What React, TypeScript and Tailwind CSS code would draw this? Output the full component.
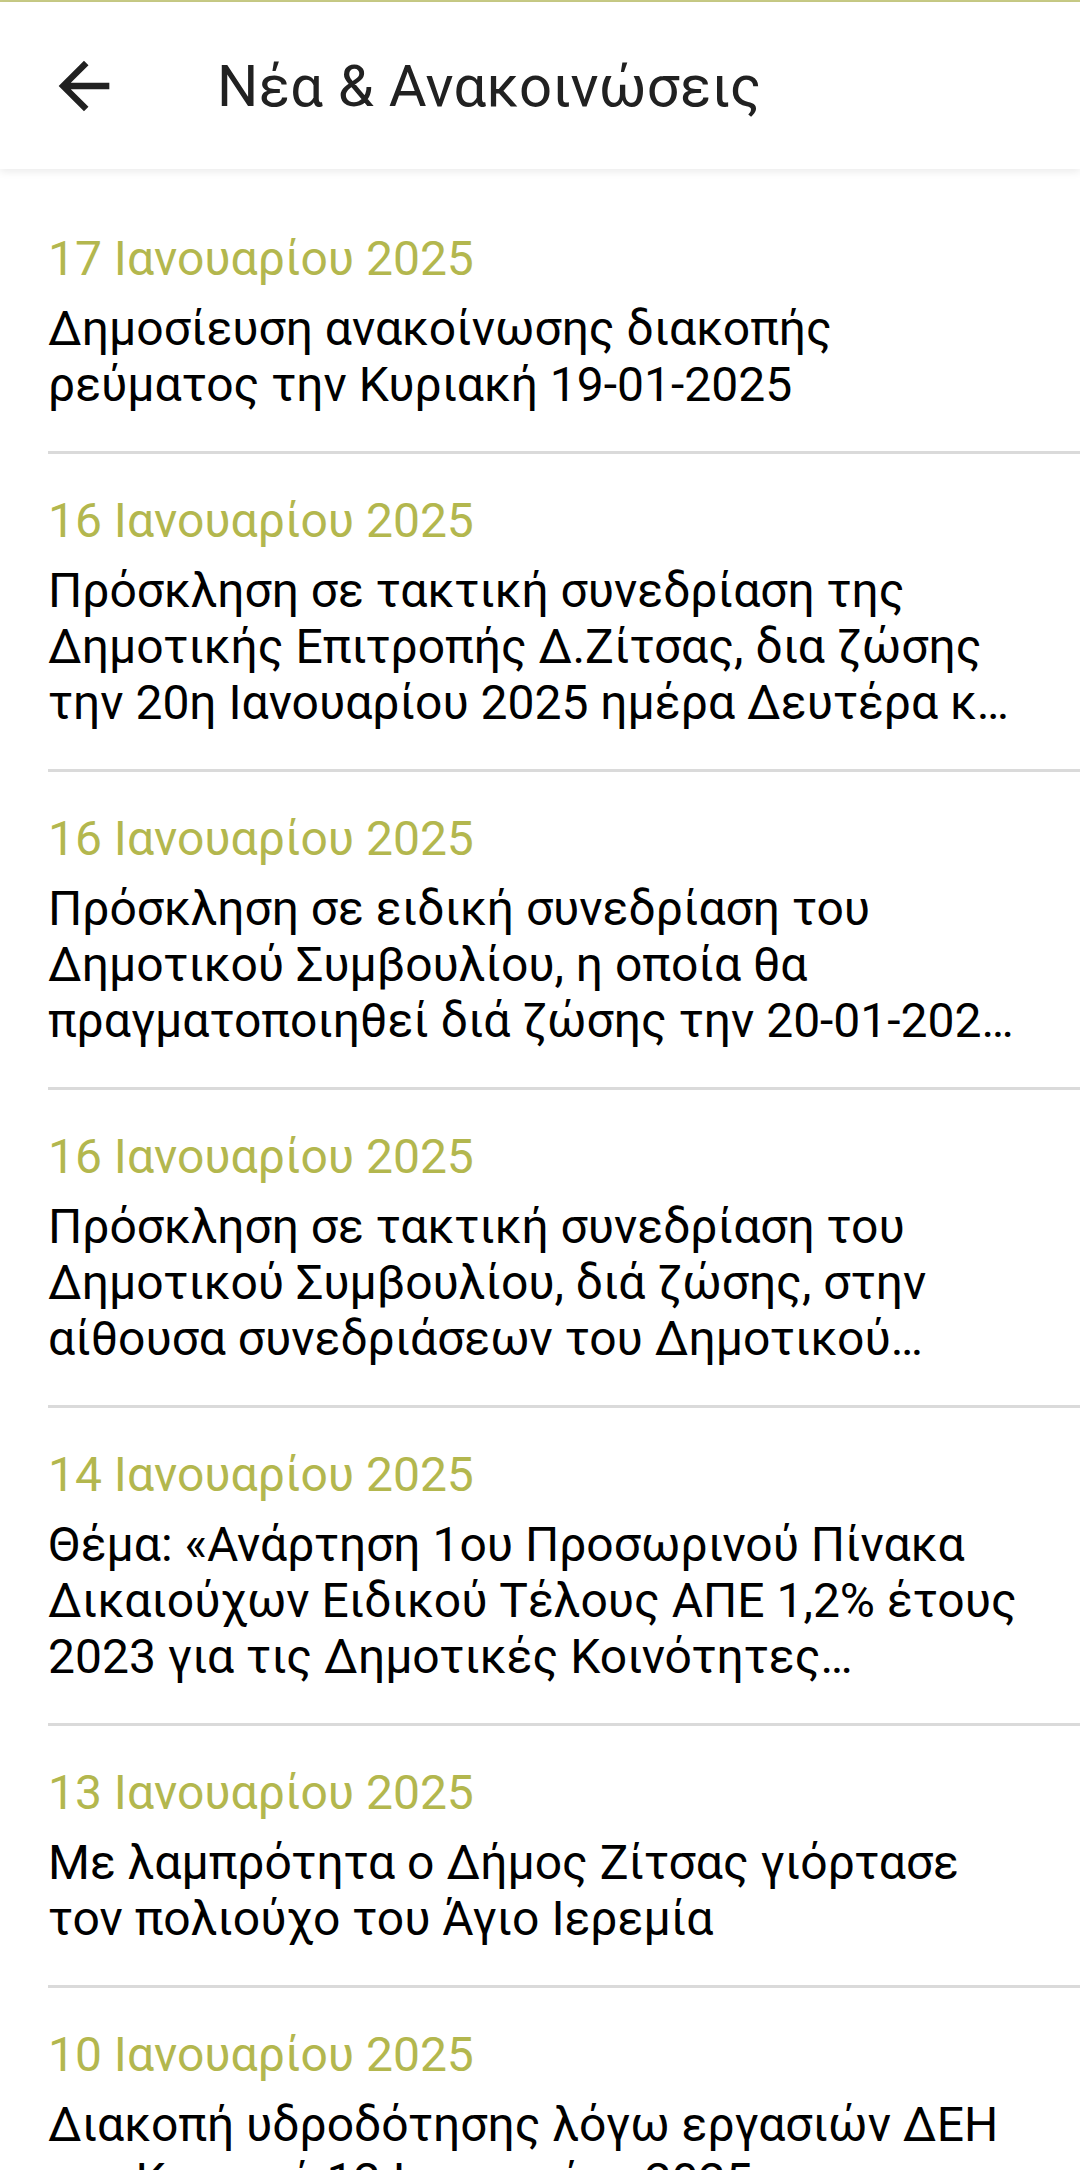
import React from 'react';

interface NewsItem {
    date: string;
    lines: string[];
}

const news: NewsItem[] = [
    {
        date: '17 Ιανουαρίου 2025',
        lines: ['Δημοσίευση ανακοίνωσης διακοπής', 'ρεύματος την Κυριακή 19-01-2025'],
    },
    {
        date: '16 Ιανουαρίου 2025',
        lines: [
            'Πρόσκληση σε τακτική συνεδρίαση της',
            'Δημοτικής Επιτροπής Δ.Ζίτσας, δια ζώσης',
            'την 20η Ιανουαρίου 2025 ημέρα Δευτέρα κ…',
        ],
    },
    {
        date: '16 Ιανουαρίου 2025',
        lines: [
            'Πρόσκληση σε ειδική συνεδρίαση του',
            'Δημοτικού Συμβουλίου, η οποία θα',
            'πραγματοποιηθεί διά ζώσης την 20-01-202…',
        ],
    },
    {
        date: '16 Ιανουαρίου 2025',
        lines: [
            'Πρόσκληση σε τακτική συνεδρίαση του',
            'Δημοτικού Συμβουλίου, διά ζώσης, στην',
            'αίθουσα συνεδριάσεων του Δημοτικού…',
        ],
    },
    {
        date: '14 Ιανουαρίου 2025',
        lines: [
            'Θέμα: «Ανάρτηση 1ου Προσωρινού Πίνακα',
            'Δικαιούχων Ειδικού Τέλους ΑΠΕ 1,2% έτους',
            '2023 για τις Δημοτικές Κοινότητες…',
        ],
    },
    {
        date: '13 Ιανουαρίου 2025',
        lines: ['Με λαμπρότητα ο Δήμος Ζίτσας γιόρτασε', 'τον πολιούχο του Άγιο Ιερεμία'],
    },
    {
        date: '10 Ιανουαρίου 2025',
        lines: ['Διακοπή υδροδότησης λόγω εργασιών ΔΕΗ', 'την Κυριακή 12 Ιανουαρίου 2025'],
    },
];

const ArrowBack = () => (
    <svg viewBox="0 0 24 24" className="w-[76px] h-[76px]" fill="#212121">
        <path d="M20 11H7.83l5.59-5.59L12 4l-8 8 8 8 1.41-1.41L7.83 13H20v-2z" />
    </svg>
);

export default function App() {
    return (
        <div
            className="w-[1080px] h-[2170px] overflow-hidden bg-white flex flex-col"
            style={{ fontFamily: 'Roboto, "Noto Sans", sans-serif' }}
        >
            <div className="h-[2px] bg-[#c8cb86] shrink-0" />
            {/* toolbar */}
            <header className="h-[167px] shrink-0 flex items-center bg-white shadow-[0_3px_8px_rgba(0,0,0,0.08)] relative z-10">
                <div className="pl-[46px] w-[217px] flex items-center">
                    <ArrowBack />
                </div>
                <h1 className="text-[58px] leading-none text-[#212121] tracking-[0.25px]">Νέα &amp; Ανακοινώσεις</h1>
            </header>

            {/* news list */}
            <main className="flex-1 pt-[23px] pl-[48px]">
                {news.map((item, i) => (
                    <div key={i} className="border-b-[3px] border-[#dadada]">
                        <div className="pt-[39px] pb-[38px] pr-[48px]">
                            <div className="text-[48px] leading-[56px] text-[#b3b74e]">{item.date}</div>
                            <div className="mt-[14px] text-[48px] leading-[56px] text-black">
                                {item.lines.map((l, j) => (
                                    <div key={j} className="whitespace-nowrap">{l}</div>
                                ))}
                            </div>
                        </div>
                    </div>
                ))}
            </main>
        </div>
    );
}
